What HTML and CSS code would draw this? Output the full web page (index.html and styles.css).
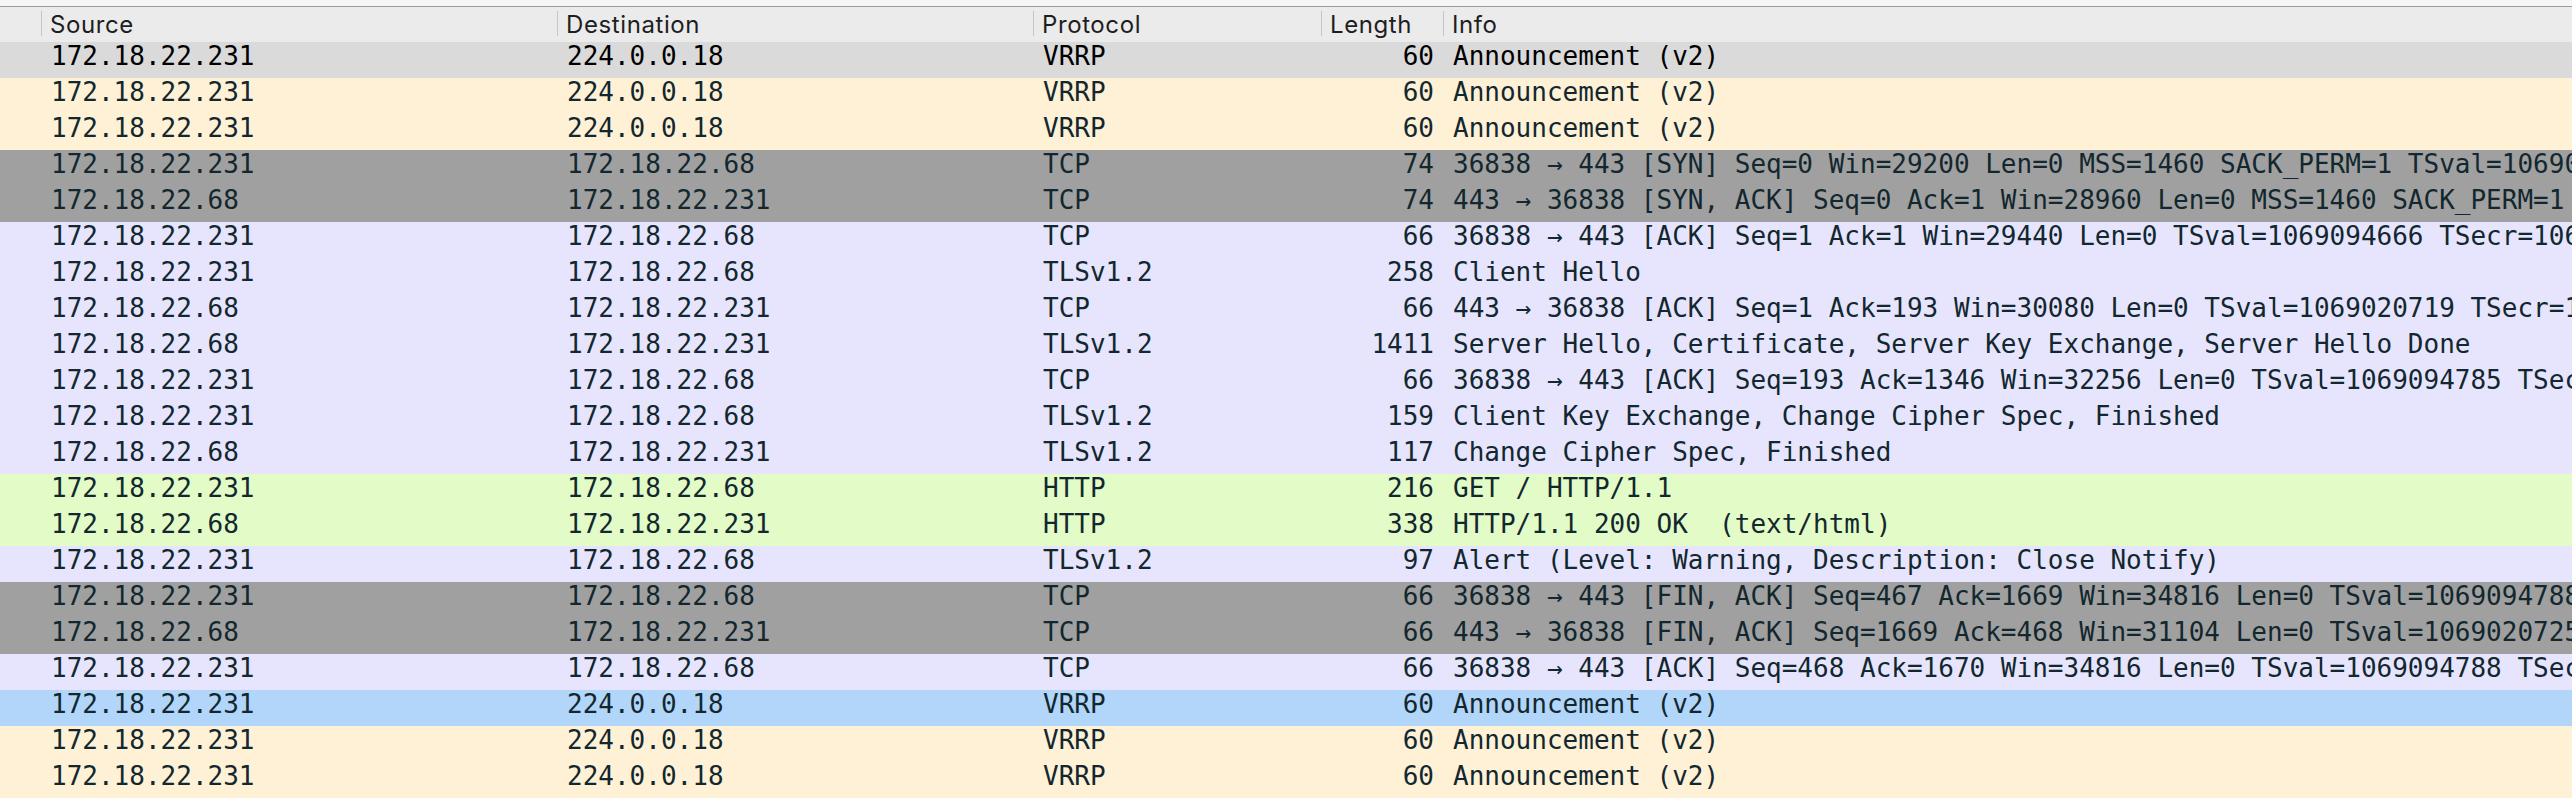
FILE: index.html
```html
<!DOCTYPE html>
<html>
<head>
<meta charset="utf-8">
<link rel="stylesheet" href="styles.css">
</head>
<body>
<div class="topbar"></div>
<div class="list">
  <div class="hdr grid">
    <div class="hc"></div>
    <div class="hc"><span class="hl">Source</span></div>
    <div class="hc"><span class="hl">Destination</span></div>
    <div class="hc"><span class="hl">Protocol</span></div>
    <div class="hc"><span class="hl">Length</span></div>
    <div class="hc"><span class="hl">Info</span></div>
  </div>

  <div class="row grid sel"><div></div><div class="c">172.18.22.231</div><div class="c">224.0.0.18</div><div class="c">VRRP</div><div class="c num">60</div><div class="c">Announcement (v2)</div></div>
  <div class="row grid routing"><div></div><div class="c">172.18.22.231</div><div class="c">224.0.0.18</div><div class="c">VRRP</div><div class="c num">60</div><div class="c">Announcement (v2)</div></div>
  <div class="row grid routing"><div></div><div class="c">172.18.22.231</div><div class="c">224.0.0.18</div><div class="c">VRRP</div><div class="c num">60</div><div class="c">Announcement (v2)</div></div>
  <div class="row grid synfin"><div></div><div class="c">172.18.22.231</div><div class="c">172.18.22.68</div><div class="c">TCP</div><div class="c num">74</div><div class="c">36838 → 443 [SYN] Seq=0 Win=29200 Len=0 MSS=1460 SACK_PERM=1 TSval=1069094665 TSecr=0 WS=128</div></div>
  <div class="row grid synfin"><div></div><div class="c">172.18.22.68</div><div class="c">172.18.22.231</div><div class="c">TCP</div><div class="c num">74</div><div class="c">443 → 36838 [SYN, ACK] Seq=0 Ack=1 Win=28960 Len=0 MSS=1460 SACK_PERM=1 TSval=1069020591 TSecr=1069094665 WS=128</div></div>
  <div class="row grid tcp"><div></div><div class="c">172.18.22.231</div><div class="c">172.18.22.68</div><div class="c">TCP</div><div class="c num">66</div><div class="c">36838 → 443 [ACK] Seq=1 Ack=1 Win=29440 Len=0 TSval=1069094666 TSecr=1069020591</div></div>
  <div class="row grid tcp"><div></div><div class="c">172.18.22.231</div><div class="c">172.18.22.68</div><div class="c">TLSv1.2</div><div class="c num">258</div><div class="c">Client Hello</div></div>
  <div class="row grid tcp"><div></div><div class="c">172.18.22.68</div><div class="c">172.18.22.231</div><div class="c">TCP</div><div class="c num">66</div><div class="c">443 → 36838 [ACK] Seq=1 Ack=193 Win=30080 Len=0 TSval=1069020719 TSecr=1069094666</div></div>
  <div class="row grid tcp"><div></div><div class="c">172.18.22.68</div><div class="c">172.18.22.231</div><div class="c">TLSv1.2</div><div class="c num">1411</div><div class="c">Server Hello, Certificate, Server Key Exchange, Server Hello Done</div></div>
  <div class="row grid tcp"><div></div><div class="c">172.18.22.231</div><div class="c">172.18.22.68</div><div class="c">TCP</div><div class="c num">66</div><div class="c">36838 → 443 [ACK] Seq=193 Ack=1346 Win=32256 Len=0 TSval=1069094785 TSecr=1069020719</div></div>
  <div class="row grid tcp"><div></div><div class="c">172.18.22.231</div><div class="c">172.18.22.68</div><div class="c">TLSv1.2</div><div class="c num">159</div><div class="c">Client Key Exchange, Change Cipher Spec, Finished</div></div>
  <div class="row grid tcp"><div></div><div class="c">172.18.22.68</div><div class="c">172.18.22.231</div><div class="c">TLSv1.2</div><div class="c num">117</div><div class="c">Change Cipher Spec, Finished</div></div>
  <div class="row grid http"><div></div><div class="c">172.18.22.231</div><div class="c">172.18.22.68</div><div class="c">HTTP</div><div class="c num">216</div><div class="c">GET / HTTP/1.1 </div></div>
  <div class="row grid http"><div></div><div class="c">172.18.22.68</div><div class="c">172.18.22.231</div><div class="c">HTTP</div><div class="c num">338</div><div class="c">HTTP/1.1 200 OK  (text/html)</div></div>
  <div class="row grid tcp"><div></div><div class="c">172.18.22.231</div><div class="c">172.18.22.68</div><div class="c">TLSv1.2</div><div class="c num">97</div><div class="c">Alert (Level: Warning, Description: Close Notify)</div></div>
  <div class="row grid synfin"><div></div><div class="c">172.18.22.231</div><div class="c">172.18.22.68</div><div class="c">TCP</div><div class="c num">66</div><div class="c">36838 → 443 [FIN, ACK] Seq=467 Ack=1669 Win=34816 Len=0 TSval=1069094788 TSecr=1069020725</div></div>
  <div class="row grid synfin"><div></div><div class="c">172.18.22.68</div><div class="c">172.18.22.231</div><div class="c">TCP</div><div class="c num">66</div><div class="c">443 → 36838 [FIN, ACK] Seq=1669 Ack=468 Win=31104 Len=0 TSval=1069020725 TSecr=1069094788</div></div>
  <div class="row grid tcp"><div></div><div class="c">172.18.22.231</div><div class="c">172.18.22.68</div><div class="c">TCP</div><div class="c num">66</div><div class="c">36838 → 443 [ACK] Seq=468 Ack=1670 Win=34816 Len=0 TSval=1069094788 TSecr=1069020725</div></div>
  <div class="row grid marked"><div></div><div class="c">172.18.22.231</div><div class="c">224.0.0.18</div><div class="c">VRRP</div><div class="c num">60</div><div class="c">Announcement (v2)</div></div>
  <div class="row grid routing"><div></div><div class="c">172.18.22.231</div><div class="c">224.0.0.18</div><div class="c">VRRP</div><div class="c num">60</div><div class="c">Announcement (v2)</div></div>
  <div class="row grid routing"><div></div><div class="c">172.18.22.231</div><div class="c">224.0.0.18</div><div class="c">VRRP</div><div class="c num">60</div><div class="c">Announcement (v2)</div></div>
</div>
</body>
</html>
```

FILE: styles.css
```css
html, body {
  margin: 0;
  padding: 0;
  background: #ffffff;
  overflow: hidden;
}

.topbar {
  height: 6px;
  background: #f6f6f6;
  border-bottom: 1px solid #9c9c9c;
}

.list {
  width: 2572px;
  overflow: hidden;
}

.grid {
  display: grid;
  grid-template-columns: 41px 516px 476px 288px 122px 1fr;
}

.hdr {
  height: 35px;
  background: #ebebeb;
  font-family: Inter, "Liberation Sans", sans-serif;
  font-size: 24px;
  letter-spacing: 0.6px;
  color: #1e1e1e;
}

.hc {
  display: flex;
  align-items: flex-start;
  overflow: hidden;
}

.hl {
  margin-top: 4px;
  height: 25px;
  line-height: 27px;
  border-left: 1px solid #c6c6c6;
  padding-left: 8px;
  white-space: nowrap;
}

.row {
  height: 36px;
  font-family: "DejaVu Sans Mono", "Liberation Mono", monospace;
  font-size: 26px;
  line-height: 29px;
  color: #12272e;
}

.c {
  padding-left: 10px;
  white-space: pre;
  overflow: hidden;
}

.num {
  text-align: right;
  padding-left: 0;
  padding-right: 9px;
}

.sel { background: #dadada; color: #000000; }
.routing { background: #fef1d6; }
.synfin { background: #a0a0a0; }
.tcp { background: #e6e5fd; }
.http { background: #e2fbc7; }
.marked { background: #b2d6fa; }
```
